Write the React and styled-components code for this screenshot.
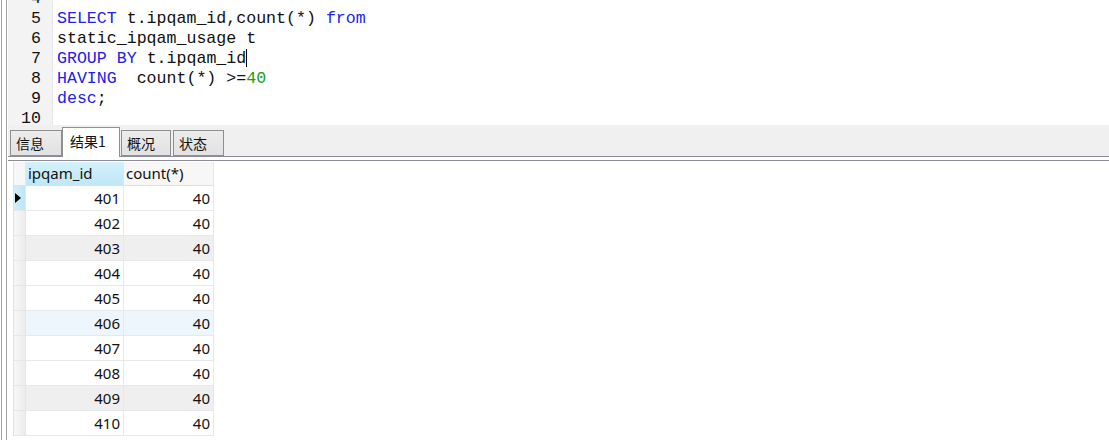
import React from "react";
import styled, { createGlobalStyle } from "styled-components";

const Global = createGlobalStyle`
  html, body { margin: 0; padding: 0; background: #fff; }
  body { width: 1109px; height: 440px; overflow: hidden; }
`;

const Page = styled.div`
  display: flex;
  width: 1109px;
  height: 440px;
  overflow: hidden;
  background: #fff;
`;

const LeftStrip = styled.div`
  width: 8px;
  flex: none;
  box-sizing: border-box;
  display: flex;
  background: #fff;
  &::before, &::after { content: ""; display: block; width: 1px; background: #a3a3a3; }
  &::before { margin-left: 1px; }
  &::after { margin-left: 4px; }
`;

const Main = styled.div`
  flex: 1;
  display: flex;
  flex-direction: column;
  min-width: 0;
`;

const Editor = styled.div`
  height: 125px;
  overflow: hidden;
  display: flex;
  background: #fff;
`;

const Gutter = styled.div`
  width: 45px;
  flex: none;
  background: #f3f3f3;
  border-right: 1px dotted #d8d8d8;
  box-sizing: border-box;
  display: flex;
  flex-direction: column;
  align-items: flex-end;
  padding-right: 11px;
  margin-top: -11px;
  height: 151px;
`;

const LineNo = styled.div`
  height: 20px;
  line-height: 20px;
  font-family: "Liberation Mono", monospace;
  font-size: 16.6px;
  color: #111;
`;

const Code = styled.div`
  flex: 1;
  display: flex;
  flex-direction: column;
  margin-top: -11px;
  padding-left: 4px;
`;

const CodeLine = styled.div`
  height: 20px;
  line-height: 20px;
  font-family: "Liberation Mono", monospace;
  font-size: 16.6px;
  color: #111;
  white-space: pre;
`;

const Kw = styled.span`
  color: #2121e8;
`;

const Num = styled.span`
  color: #15a015;
`;

const Caret = styled.span`
  display: inline-block;
  width: 1px;
  height: 18px;
  background: #000;
  vertical-align: -4px;
`;

const TabStrip = styled.div`
  height: 31px;
  background: #f0f0f0;
  display: flex;
  align-items: flex-end;
  padding-left: 2px;
  border-bottom: 1px solid #8c8c96;
`;

const Tab = styled.div`
  box-sizing: border-box;
  height: ${(p) => (p.$active ? "30px" : "26px")};
  margin-bottom: ${(p) => (p.$active ? "-1px" : "0")};
  width: ${(p) => p.$w}px;
  margin-right: ${(p) => p.$mr || 0}px;
  border: 1px solid #8f8f8f;
  border-bottom: ${(p) => (p.$active ? "none" : "1px solid #8f8f8f")};
  background: ${(p) =>
    p.$active ? "#fff" : "linear-gradient(#ececec, #e2e2e2)"};
  font-family: "Noto Sans CJK SC", "Noto Sans", sans-serif;
  font-size: 14px;
  color: #111;
  display: flex;
  align-items: center;
  padding-left: ${(p) => (p.$active ? "7px" : "5px")};
  padding-bottom: ${(p) => (p.$active ? "3px" : "0")};
  position: relative;
  z-index: 1;
`;

const Gap = styled.div`
  height: 3px;
  background: #fff;
  border-bottom: 1px solid #8c8c96;
`;

const GridArea = styled.div`
  flex: 1;
  background: #fff;
  padding-left: 5px;
  padding-top: 1px;
`;

const Grid = styled.div`
  display: grid;
  grid-template-columns: 12px 98px 90px;
  width: 200px;
  border-left: 1px solid #e2e2e2;
`;

const HeadCell = styled.div`
  height: 24px;
  box-sizing: border-box;
  border-right: 1px solid #e6e6e6;
  border-bottom: 1px solid #e0e0e0;
  background: ${(p) =>
    p.$sel ? "linear-gradient(#d4f1fc, #bfe7f7)" : "#f7f7f7"};
  font-family: "Noto Sans", sans-serif;
  font-size: 15px;
  color: #111;
  display: flex;
  align-items: center;
  padding-left: 2px;
  padding-bottom: 1px;
`;

const Indicator = styled.div`
  height: 25px;
  box-sizing: border-box;
  border-right: 1px solid #e6e6e6;
  border-bottom: 1px solid #e6e6e6;
  background: ${(p) =>
    p.$cur
      ? "linear-gradient(90deg, #d0eefa, #bfe6f6)"
      : "linear-gradient(90deg, #f7f7f7, #ececec)"};
  display: flex;
  align-items: center;
  padding-left: 1px;
`;

const Cell = styled.div`
  height: 25px;
  box-sizing: border-box;
  border-right: 1px solid #e8e8e8;
  border-bottom: 1px solid #e8e8e8;
  background: ${(p) => p.$bg};
  font-family: "Noto Sans", sans-serif;
  font-size: 15px;
  color: #111;
  display: flex;
  align-items: center;
  justify-content: flex-end;
  padding-right: 3px;
`;

const Arrow = styled.div`
  width: 0;
  height: 0;
  border-top: 5px solid transparent;
  border-bottom: 5px solid transparent;
  border-left: 6px solid #000;
`;

const rows = [401, 402, 403, 404, 405, 406, 407, 408, 409, 410];
const rowBg = (id) => {
  if (id === 403 || id === 409) return "#efefef";
  if (id === 406) return "#edf5fd";
  return "#fff";
};

export default function App() {
  return (
    <>
      <Global />
      <Page>
        <LeftStrip />
        <Main>
          <Editor>
            <Gutter>
              {[4, 5, 6, 7, 8, 9, 10].map((n) => (
                <LineNo key={n}>{n}</LineNo>
              ))}
            </Gutter>
            <Code>
              <CodeLine> </CodeLine>
              <CodeLine>
                <Kw>SELECT</Kw> t.ipqam_id,count(*) <Kw>from</Kw>
              </CodeLine>
              <CodeLine>static_ipqam_usage t</CodeLine>
              <CodeLine>
                <Kw>GROUP</Kw> <Kw>BY</Kw> t.ipqam_id<Caret />
              </CodeLine>
              <CodeLine>
                <Kw>HAVING</Kw>  count(*) &gt;=<Num>40</Num>
              </CodeLine>
              <CodeLine>
                <Kw>desc</Kw>;
              </CodeLine>
              <CodeLine> </CodeLine>
            </Code>
          </Editor>
          <TabStrip>
            <Tab $w={52}>信息</Tab>
            <Tab $w={58} $active $mr={1}>结果1</Tab>
            <Tab $w={50} $mr={2}>概况</Tab>
            <Tab $w={51}>状态</Tab>
          </TabStrip>
          <Gap />
          <GridArea>
            <Grid>
              <HeadCell />
              <HeadCell $sel>ipqam_id</HeadCell>
              <HeadCell>count(*)</HeadCell>
              {rows.map((id, i) => (
                <React.Fragment key={id}>
                  <Indicator $cur={i === 0}>{i === 0 && <Arrow />}</Indicator>
                  <Cell $bg={rowBg(id)}>{id}</Cell>
                  <Cell $bg={rowBg(id)}>40</Cell>
                </React.Fragment>
              ))}
            </Grid>
          </GridArea>
        </Main>
      </Page>
    </>
  );
}
